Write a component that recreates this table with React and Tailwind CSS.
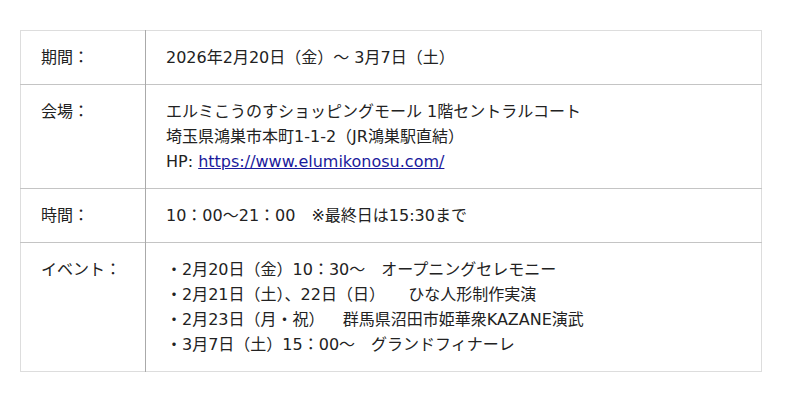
const rows = [
  { label: "期間：", lines: ["2026年2月20日（金）〜 3月7日（土）"] },
  {
    label: "会場：",
    lines: [
      "エルミこうのすショッピングモール 1階セントラルコート",
      "埼玉県鴻巣市本町1-1-2（JR鴻巣駅直結）",
      "link",
    ],
  },
  { label: "時間：", lines: ["10：00〜21：00　※最終日は15:30まで"] },
  {
    label: "イベント：",
    lines: [
      "・2月20日（金）10：30〜　オープニングセレモニー",
      "・2月21日（土）、22日（日）　   ひな人形制作実演",
      "・2月23日（月・祝）　  群馬県沼田市姫華衆KAZANE演武",
      "・3月7日（土）15：00〜　グランドフィナーレ",
    ],
  },
];

export default function App() {
  return (
    <div
      className="w-[800px] h-[402px] bg-white pt-[30px] px-5 text-[16px] leading-[25px] text-[#222]"
      style={{ fontFamily: '"DejaVu Sans", "Noto Sans CJK JP", sans-serif' }}
    >
      <table className="w-[742px] border-collapse border border-[#ddd]">
        <tbody>
          {rows.map((r, i) => (
            <tr key={i} className="border-t border-[#c4c4c4] first:border-t-[#ddd]">
              <td className="w-[125px] align-top py-[14px] pl-5 border-r border-[#aaa]">{r.label}</td>
              <td className="align-top py-[14px] pl-5">
                {r.lines.map((l, j) =>
                  l === "link" ? (
                    <div key={j}>
                      HP:{" "}
                      <a href="#" className="text-[#1a1a9c] underline">
                        https://www.elumikonosu.com/
                      </a>
                    </div>
                  ) : (
                    <div key={j} className="whitespace-pre">{l}</div>
                  )
                )}
              </td>
            </tr>
          ))}
        </tbody>
      </table>
    </div>
  );
}
